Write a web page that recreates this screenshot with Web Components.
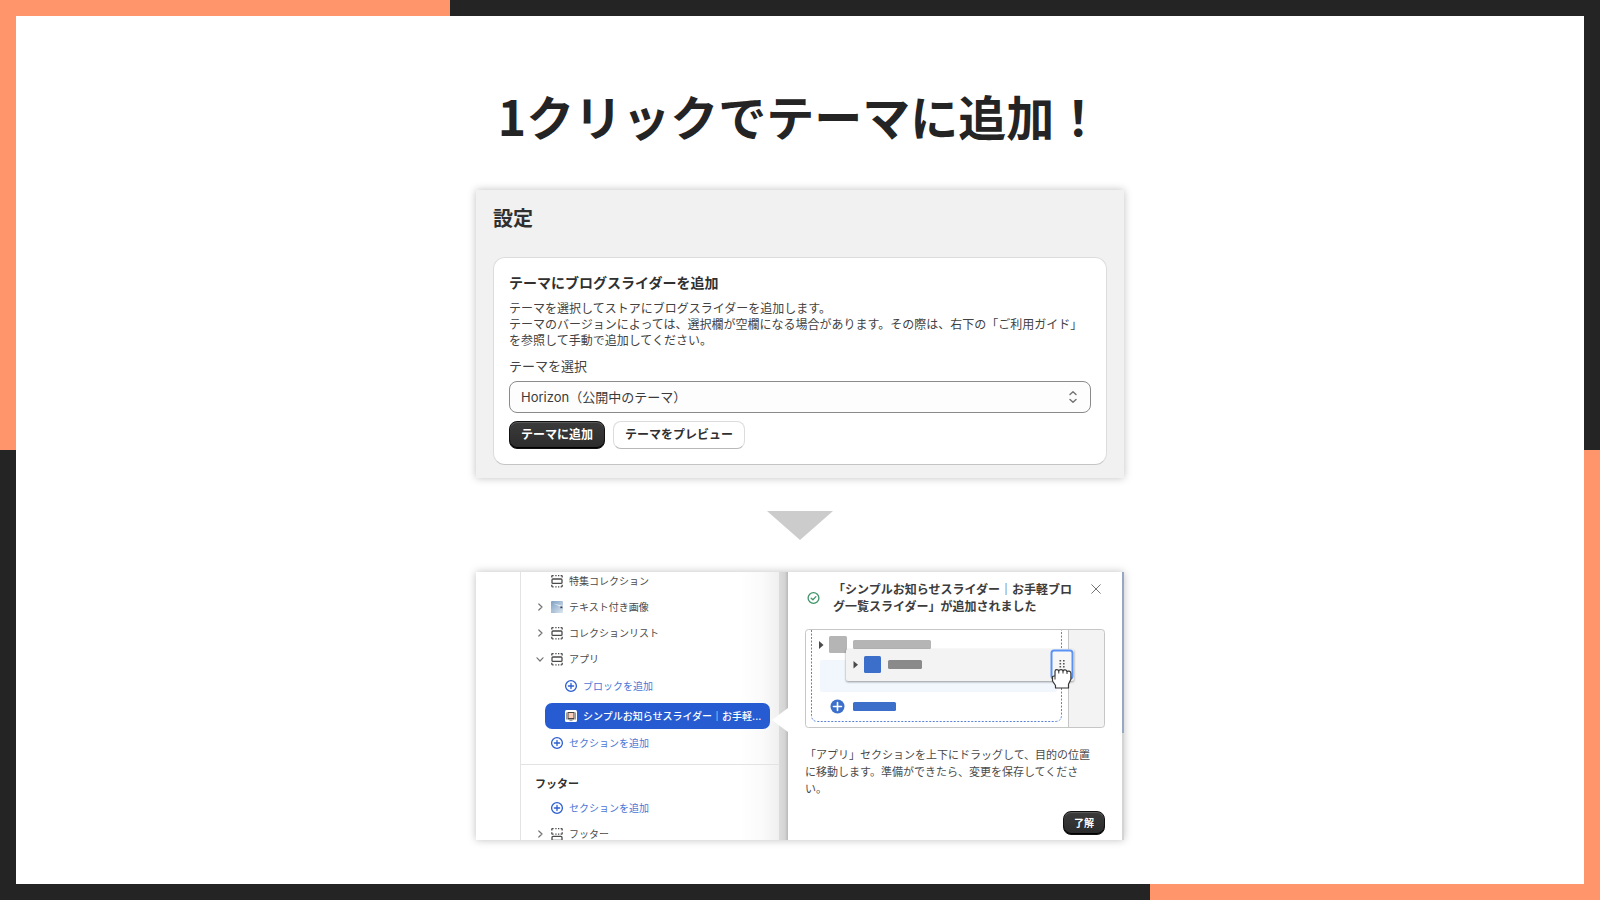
<!DOCTYPE html>
<html lang="ja">
<head>
<meta charset="utf-8">
<meta name="viewport" content="width=device-width, initial-scale=1">
<title>1クリックでテーマに追加！</title>
<style>
	html, body {
		margin: 0;
		min-height: 100%;
	}
	body {
		font-family: Inter, "Noto Sans CJK JP", sans-serif;
		color: #303030;
	}
</style>
</head>
<body>
<promo-slide>
	<span slot="title">1クリックでテーマに追加！</span>
	<settings-card></settings-card>
	<down-arrow></down-arrow>
	<theme-editor></theme-editor>
</promo-slide>

<script>
const define = (name, template, setup) =>
	customElements.define(
		name,
		class extends HTMLElement {
			connectedCallback() {
				if (this.shadowRoot) return;
				this.attachShadow({ mode: "open" });
				this.shadowRoot.innerHTML = template;
				if (setup) setup(this, this.shadowRoot);
			}
		}
	);

// page frame with the two-tone border
define("promo-slide", `
	<style>
		:host {
			--orange: #ff966b;
			--dark: #242424;
			display: flex;
			box-sizing: border-box;
			min-height: 100vh;
			padding: 16px;
			background:
				linear-gradient(90deg, var(--orange) 28.125%, var(--dark) 28.125%) top / 100% 50% no-repeat,
				linear-gradient(90deg, var(--dark) 71.875%, var(--orange) 71.875%) bottom / 100% 50% no-repeat;
		}
		main {
			flex: 1;
			display: flex;
			flex-direction: column;
			align-items: center;
			gap: 32px;
			padding: 63px 16px 40px;
			box-sizing: border-box;
			background: #fff;
		}
		h1 {
			margin: 0 0 7px;
			font: bold 48px/72px "Noto Sans CJK JP", sans-serif;
			color: #242424;
		}
		::slotted(settings-card), ::slotted(theme-editor) {
			width: min(648px, 100%);
			box-shadow: 0 0 8px rgba(0, 0, 0, .25);
		}
	</style>
	<main>
		<h1><slot name="title"></slot></h1>
		<slot></slot>
	</main>
`);

define("down-arrow", `
	<style>
		:host {
			display: block;
			width: 66px;
			height: 29px;
			margin-top: 1px;
			background: #ccc;
			clip-path: polygon(0 0, 100% 0, 50% 100%);
		}
	</style>
`);

define("ui-button", `
	<style>
		:host {
			display: inline-flex;
		}
		button {
			height: 28px;
			padding: 0 11px;
			border: 1px solid #dcdcdc;
			border-bottom-color: #b8b8b8;
			border-radius: 8px;
			background: #fff;
			color: #303030;
			font: 600 12px/16px Inter, "Noto Sans CJK JP", sans-serif;
		}
		:host([primary]) button {
			border-color: #111;
			background: linear-gradient(#3b3b3b, #2b2b2b);
			box-shadow: inset 0 1px 0 #5a5a5a, inset 0 -1px 0 #000;
			color: #fff;
		}
		:host([small]) button {
			height: 24px;
			padding: 0 10px;
			font-size: 10px;
		}
	</style>
	<button type="button"><slot></slot></button>
`);

define("settings-card", `
	<style>
		:host {
			display: block;
			box-sizing: border-box;
			padding: 14px 17px 13px;
			background: #f1f1f1;
		}
		h2 {
			margin: 0 0 23px;
			font-size: 20px;
			line-height: 30px;
		}
		section {
			padding: 15px;
			border: 1px solid #dcdcdc;
			border-bottom-color: #c4c4c4;
			border-radius: 12px;
			background: #fff;
		}
		h3 {
			margin: 0 0 8px;
			font-size: 14px;
			line-height: 20px;
		}
		p {
			margin: 0 0 7px;
			font-size: 12px;
			line-height: 16px;
			color: #424242;
		}
		label {
			display: block;
			margin-bottom: 5px;
			font-size: 13px;
			line-height: 20px;
			color: #424242;
		}
		.select {
			display: grid;
			align-items: center;
			margin-bottom: 8px;
		}
		.select > * {
			grid-area: 1 / 1;
		}
		select {
			appearance: none;
			width: 100%;
			height: 32px;
			padding: 0 11px;
			border: 1px solid #8a8a8a;
			border-radius: 8px;
			background: #fdfdfd;
			color: #3a3a3a;
			font: 13px/20px Inter, "Noto Sans CJK JP", sans-serif;
		}
		svg {
			justify-self: end;
			margin-right: 12px;
			pointer-events: none;
		}
		.actions {
			display: flex;
			gap: 8px;
		}
	</style>
	<h2>設定</h2>
	<section>
		<h3>テーマにブログスライダーを追加</h3>
		<p>テーマを選択してストアにブログスライダーを追加します。<br>テーマのバージョンによっては、選択欄が空欄になる場合があります。その際は、右下の「ご利用ガイド」を参照して手動で追加してください。</p>
		<label for="theme">テーマを選択</label>
		<div class="select">
			<select id="theme"><option>Horizon（公開中のテーマ）</option></select>
			<svg width="12" height="16" viewBox="0 0 12 16" fill="none" stroke="#757575" stroke-width="1.5" stroke-linecap="round" stroke-linejoin="round"><path d="M3 5.5 6 2.8l3 2.7M3 10.5l3 2.7 3-2.7"/></svg>
		</div>
		<div class="actions">
			<ui-button primary>テーマに追加</ui-button>
			<ui-button>テーマをプレビュー</ui-button>
		</div>
	</section>
`);

const icons = {
	section: `<g fill="none" stroke="#4a4a4a" stroke-width="1.3"><rect x="1" y="4" width="10" height="4.4" rx="1"/><path d="M.8 2.6V1.4Q.8.6 1.6.6h1M4.3.6h1.3M7 .6h1.3M9.6.6h.8q.8 0 .8.8v1.2M.8 9.8V11q0 .8.8.8h1M4.3 11.8h1.3M7 11.8h1.3M9.6 11.8h.8q.8 0 .8-.8V9.8"/></g>`,
	footer: `<g fill="none" stroke="#4a4a4a" stroke-width="1.3"><path d="M.8 2.6V1.4Q.8.6 1.6.6h1M4.3.6h1.3M7 .6h1.3M9.6.6h.8q.8 0 .8.8v1.2M.8 4.2v1.2q0 .8.8.8h1M4.3 6.2h1.3M7 6.2h1.3M9.6 6.2h.8q.8 0 .8-.8V4.2"/><rect x="1" y="8.4" width="10" height="4" rx="1"/></g>`,
	image: `<defs><linearGradient id="g" x2="1" y2="1"><stop stop-color="#7da0c4"/><stop offset="1" stop-color="#dde6ef"/></linearGradient></defs><rect width="12" height="12" rx="1" fill="url(#g)"/><path d="M2 2.5 12 5v1.5Z" fill="#f4f8fb"/><path d="M0 8 5 12H0Z" fill="#a9c0d8"/><rect x="9.4" y="5.4" width="2" height="1.8" fill="#2f4258"/>`,
	plus: `<g fill="none" stroke="#2b5fd0" stroke-width="1.3" stroke-linecap="round"><circle cx="6" cy="6" r="5.4"/><path d="M6 3.4v5.2M3.4 6h5.2"/></g>`,
	app: `<rect width="12" height="12" rx="1.5" fill="#fff"/><path d="M1 2.5h1v7H1zM10 2.5h1v7h-1z" fill="#999"/><rect x="2.5" y="2" width="7" height="7.5" fill="#444"/><rect x="3.5" y="3" width="5" height="5" fill="#f9cdb8"/><path d="M4.5 10.6h3" stroke="#999"/>`
};

// one row of the section tree: icon="…", chevron="right|down", nested, selected, link
define("tree-row", `
	<style>
		:host {
			display: block;
		}
		button {
			display: flex;
			align-items: center;
			box-sizing: border-box;
			width: 100%;
			height: 26px;
			padding: 0 0 0 14px;
			border: 0;
			border-radius: 7px;
			background: none;
			color: #4a4a4a;
			font: 10px/16px Inter, "Noto Sans CJK JP", sans-serif;
			white-space: nowrap;
		}
		.chevron {
			width: 10px;
			margin-right: 6px;
		}
		.icon {
			margin-right: 6px;
			overflow: visible;
		}
		:host([link]) button {
			color: #4a76d6;
		}
		:host([nested]) button {
			width: auto;
			margin-left: 24px;
			padding-left: 20px;
		}
		:host([nested]) .chevron {
			display: none;
		}
		:host([selected]) button {
			width: 225px;
			background: #265bd2;
			color: #fff;
			font-weight: 500;
		}
	</style>
	<button type="button">
		<svg class="chevron" width="10" height="10" viewBox="0 0 10 10" fill="none" stroke="#757575" stroke-width="1.2" stroke-linecap="round" stroke-linejoin="round"><path></path></svg>
		<svg class="icon" width="12" height="12" viewBox="0 0 12 12"></svg>
		<slot></slot>
	</button>
`, (host, root) => {
	const arrows = { right: "M3.8 2 7 5 3.8 8", down: "M2 3.8 5 7 8 3.8" };
	const chevron = host.getAttribute("chevron");
	if (chevron) root.querySelector("path").setAttribute("d", arrows[chevron]);
	root.querySelector(".icon").innerHTML = icons[host.getAttribute("icon")];
});

define("section-tree", `
	<style>
		:host {
			display: block;
			contain: size;
			overflow: hidden;
			box-sizing: border-box;
			padding-left: 44px;
			background: linear-gradient(90deg, #fff 84%, #fafafa 92%, #f0f0f0 97%, #dcdcdc 97%, #d4d4d4 99%, #b8b8b8);
		}
		.tree {
			min-height: 100%;
			margin-right: 8px;
			border-left: 1px solid #e3e3e3;
		}
		.group {
			margin-top: -4px;
			padding-bottom: 8px;
			border-bottom: 1px solid #e3e3e3;
		}
		.blocks {
			display: grid;
			gap: 4px;
			padding: 1px 0;
		}
		h4 {
			margin: 0;
			padding: 11px 0 3px 14px;
			font-size: 11px;
			line-height: 16px;
		}
	</style>
	<div class="tree">
		<div class="group">
			<tree-row icon="section">特集コレクション</tree-row>
			<tree-row icon="image" chevron="right">テキスト付き画像</tree-row>
			<tree-row icon="section" chevron="right">コレクションリスト</tree-row>
			<tree-row icon="section" chevron="down">アプリ</tree-row>
			<div class="blocks">
				<tree-row icon="plus" nested link>ブロックを追加</tree-row>
				<tree-row icon="app" nested selected>シンプルお知らせスライダー｜お手軽...</tree-row>
			</div>
			<tree-row icon="plus" link>セクションを追加</tree-row>
		</div>
		<h4>フッター</h4>
		<tree-row icon="plus" link>セクションを追加</tree-row>
		<tree-row icon="footer" chevron="right">フッター</tree-row>
	</div>
`);

// picture of a block being dragged into another place
define("drag-demo", `
	<style>
		:host, svg {
			display: block;
		}
		svg {
			width: 100%;
		}
	</style>
	<svg viewBox="0 0 300 99" aria-hidden="true">
		<rect x=".5" y=".5" width="299" height="98" rx="3" fill="#fff"/>
		<path d="M263.5.5H297q2.5 0 2.5 2.5v93q0 2.5-2.5 2.5h-33.5Z" fill="#f3f3f3"/>
		<path d="M263.5 1v97" stroke="#c6c6c6"/>
		<rect x=".5" y=".5" width="299" height="98" rx="3" fill="none" stroke="#c6c6c6"/>
		<rect x="15" y="31" width="237" height="32" rx="2" fill="#f2f7fe"/>
		<path d="M6.5 1v85q0 6.5 6.5 6.5h237q6.5 0 6.5-6.5V1" fill="none" stroke="#5b82d6" stroke-dasharray="2 1.5"/>
		<path d="M14 12v8l4.5-4Z" fill="#4a4a4a"/>
		<rect x="24" y="7" width="18" height="17" rx="1.5" fill="#b5b5b5"/>
		<rect x="48" y="11" width="78" height="9" rx="1.5" fill="#b5b5b5"/>
		<rect x="41" y="20" width="228" height="32" rx="2" fill="#f3f3f3" style="filter:drop-shadow(0 1px 1px #0006)"/>
		<path d="M48.5 32v7.5l4.5-3.7Z" fill="#4a4a4a"/>
		<rect x="59" y="27" width="17" height="17" rx="1.5" fill="#3c6fca"/>
		<rect x="83" y="31" width="34" height="9" rx="1.5" fill="#8a8a8a"/>
		<rect x="246.5" y="21.5" width="21" height="28" rx="2.5" fill="#f7f7f7" stroke="#5b93f5" stroke-width="2"/>
		<path d="M254.5 31h1.6v1.6h-1.6zM258 31h1.6v1.6H258zM254.5 34h1.6v1.6h-1.6zM258 34h1.6v1.6H258zM254.5 37h1.6v1.6h-1.6zM258 37h1.6v1.6H258z" fill="#555"/>
		<path d="M250.5 59v-2.500l-3-4.500v-4.500l2.500-.8v-4.200q0-1.800 1.800-1.800t2 1.200q.4-1.200 2.200-1.200t2 1.200q.6-1.200 2.200-1 1.600.2 1.800 1.700.6-.7 2.200-.5 1.700.4 1.700 2.200v6l-2.400 5V59Z" fill="#fff" stroke="#333" stroke-width="1.2" stroke-linejoin="round"/>
		<path d="M253.8 42v2.5M258 42v2.5M262 42.5V45M250 47v3.5" stroke="#333" fill="none"/>
		<circle cx="32.5" cy="77.5" r="7" fill="#3c6fca"/>
		<path d="M32.5 73.5v8M28.5 77.5h8" stroke="#fff" stroke-width="1.6" stroke-linecap="round"/>
		<rect x="48" y="73" width="43" height="9" rx="1.5" fill="#3c6fca"/>
	</svg>
`);

define("added-popover", `
	<style>
		:host {
			display: block;
			position: relative;
			box-sizing: border-box;
			padding: 9px 17px 5px;
			background: #fff;
		}
		/* beak pointing at the selected block */
		:host::before {
			content: "";
			position: absolute;
			top: 136px;
			right: 100%;
			width: 16px;
			height: 24px;
			background: #fff;
			clip-path: polygon(100% 0, 100% 100%, 0 50%);
		}
		header {
			display: flex;
			align-items: center;
			margin-bottom: 14px;
		}
		h4 {
			width: 20em;
			margin: 0 auto 0 13px;
			font-size: 12px;
			line-height: 17px;
			color: #3c3c3c;
		}
		.close {
			align-self: flex-start;
			display: flex;
			padding: 3px 4px;
			border: 0;
			background: none;
		}
		p {
			max-width: 26em;
			margin: 19px 0 13px;
			font-size: 11px;
			line-height: 17px;
			color: #4a4a4a;
		}
		footer {
			display: flex;
			justify-content: flex-end;
		}
	</style>
	<header>
		<svg width="15" height="14" viewBox="0 0 15 14" fill="none" stroke="#3f9468" stroke-width="1.3" stroke-linecap="round" stroke-linejoin="round"><circle cx="8.5" cy="7" r="5.4"/><path d="m6.2 7.2 1.7 1.6 3-3.2"/></svg>
		<h4>「シンプルお知らせスライダー｜お手軽ブログ一覧スライダー」が追加されました</h4>
		<button class="close" type="button" aria-label="閉じる">
			<svg width="10" height="10" viewBox="0 0 10 10" stroke="#757575" stroke-linecap="round"><path d="m.7.7 8.6 8.6M9.3.7.7 9.3"/></svg>
		</button>
	</header>
	<drag-demo></drag-demo>
	<p>「アプリ」セクションを上下にドラッグして、目的の位置に移動します。準備ができたら、変更を保存してください。</p>
	<footer><ui-button primary small>了解</ui-button></footer>
`);

define("theme-editor", `
	<style>
		:host {
			display: grid;
			grid-template-columns: 312px 1fr 2px;
			background: #fff;
		}
		.edge {
			background: linear-gradient(#97a6c2 60%, #d4d4d4 60%);
		}
	</style>
	<section-tree></section-tree>
	<added-popover></added-popover>
	<div class="edge"></div>
`);
</script>
</body>
</html>
